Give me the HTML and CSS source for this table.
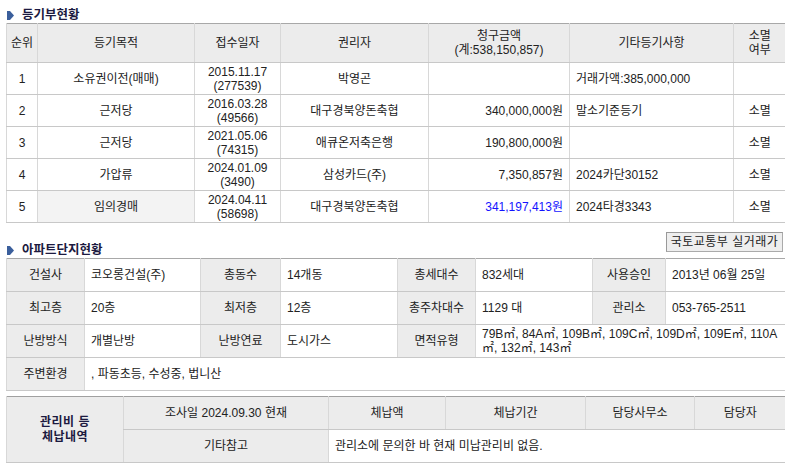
FILE: index.html
```html
<!DOCTYPE html>
<html lang="ko">
<head>
<meta charset="utf-8">
<link rel="stylesheet" href="styles.css">
</head>
<body>
<div class="page">
  <div class="sec-head first">
    <h2 class="sec-title"><svg class="bullet" width="7" height="9" viewBox="0 0 7 9"><polygon points="0,0 3,0 7,4.5 3,9 0,9" fill="#3b5f9c"/></svg>등기부현황</h2>
  </div>
  <table class="grid reg">
    <colgroup>
      <col style="width:31px"><col style="width:157px"><col style="width:86px"><col style="width:148px"><col style="width:141px"><col style="width:164px"><col style="width:52px">
    </colgroup>
    <thead>
      <tr>
        <th>순위</th><th>등기목적</th><th>접수일자</th><th>권리자</th><th>청구금액<br>(계:538,150,857)</th><th>기타등기사항</th><th>소멸<br>여부</th>
      </tr>
    </thead>
    <tbody>
      <tr><td class="c">1</td><td class="c">소유권이전(매매)</td><td class="c">2015.11.17<br>(277539)</td><td class="c">박영곤</td><td class="r"></td><td class="l">거래가액:385,000,000</td><td class="c"></td></tr>
      <tr><td class="c">2</td><td class="c">근저당</td><td class="c">2016.03.28<br>(49566)</td><td class="c">대구경북양돈축협</td><td class="r">340,000,000원</td><td class="l">말소기준등기</td><td class="c">소멸</td></tr>
      <tr><td class="c">3</td><td class="c">근저당</td><td class="c">2021.05.06<br>(74315)</td><td class="c">애큐온저축은행</td><td class="r">190,800,000원</td><td class="l"></td><td class="c">소멸</td></tr>
      <tr><td class="c">4</td><td class="c">가압류</td><td class="c">2024.01.09<br>(3490)</td><td class="c">삼성카드(주)</td><td class="r">7,350,857원</td><td class="l">2024카단30152</td><td class="c">소멸</td></tr>
      <tr><td class="c">5</td><td class="c hl">임의경매</td><td class="c">2024.04.11<br>(58698)</td><td class="c">대구경북양돈축협</td><td class="r blue">341,197,413원</td><td class="l">2024타경3343</td><td class="c">소멸</td></tr>
    </tbody>
  </table>

  <div class="sec-head second">
    <h2 class="sec-title"><svg class="bullet" width="7" height="9" viewBox="0 0 7 9"><polygon points="0,0 3,0 7,4.5 3,9 0,9" fill="#3b5f9c"/></svg>아파트단지현황</h2>
    <button class="btn" type="button">국토교통부 실거래가</button>
  </div>
  <table class="grid apt">
    <colgroup>
      <col style="width:78px"><col style="width:116px"><col style="width:80px"><col style="width:117px"><col style="width:78px"><col style="width:117px"><col style="width:73px"><col style="width:120px">
    </colgroup>
    <tbody>
      <tr><th>건설사</th><td>코오롱건설(주)</td><th>총동수</th><td>14개동</td><th>총세대수</th><td>832세대</td><th>사용승인</th><td>2013년 06월 25일</td></tr>
      <tr><th>최고층</th><td>20층</td><th>최저층</th><td>12층</td><th>총주차대수</th><td>1129 대</td><th>관리소</th><td>053-765-2511</td></tr>
      <tr><th>난방방식</th><td>개별난방</td><th>난방연료</th><td>도시가스</td><th>면적유형</th><td colspan="3" class="area">79B㎡, 84A㎡, 109B㎡, 109C㎡, 109D㎡, 109E㎡, 110A<br>㎡, 132㎡, 143㎡</td></tr>
      <tr><th>주변환경</th><td colspan="7">, 파동초등, 수성중, 법니산</td></tr>
    </tbody>
  </table>

  <table class="grid fee">
    <colgroup>
      <col style="width:117px"><col style="width:205px"><col style="width:117px"><col style="width:140px"><col style="width:109px"><col style="width:91px">
    </colgroup>
    <tbody>
      <tr><th rowspan="2" class="fee-title">관리비 등<br>체납내역</th><th>조사일 2024.09.30 현재</th><th>체납액</th><th>체납기간</th><th>담당사무소</th><th>담당자</th></tr>
      <tr><th>기타참고</th><td colspan="4">관리소에 문의한 바 현재 미납관리비 없음.</td></tr>
    </tbody>
  </table>
</div>
</body>
</html>
```

FILE: styles.css
```css
html, body {
  margin: 0;
  padding: 0;
  background: #ffffff;
}
body {
  font-family: "Liberation Sans", "Noto Sans CJK KR", sans-serif;
  font-size: 12px;
  color: #222222;
  width: 785px;
  overflow: hidden;
}
.page {
  padding-left: 6px;
  width: 779px;
}
.sec-head {
  display: flex;
  align-items: flex-end;
  justify-content: space-between;
}
.sec-head.first {
  height: 23px;
}
.sec-head.second {
  height: 34px;
  margin-top: 1px;
}
.sec-title {
  margin: 0 0 1px 1px;
  display: flex;
  align-items: center;
  gap: 8px;
  font-size: 12.5px;
  font-weight: bold;
  line-height: 14px;
  color: #1c1a40;
}
.bullet {
  display: block;
}
.btn {
  font-family: inherit;
  font-size: 12px;
  color: #222;
  background: #eeeeee;
  border: 1px solid #999999;
  border-right-color: #aaaaaa;
  border-bottom-color: #aaaaaa;
  width: 117px;
  height: 20px;
  padding: 0;
  margin: 0 2px 6px 0;
  line-height: 17px;
  letter-spacing: 0.5px;
}
.grid {
  border-collapse: collapse;
  table-layout: fixed;
  width: 779px;
  border-top: 1px solid #a8a8a8;
  border-bottom: 1px solid #b4b4b4;
}
.grid th, .grid td {
  border-left: 1px solid #d8d8d8;
  border-bottom: 1px solid #c8c8c8;
  padding: 0 6px;
  font-weight: normal;
  line-height: 14px;
  overflow: hidden;
  white-space: nowrap;
}
.grid th {
  background: #ececec;
  text-align: center;
}
.reg thead th {
  height: 38px;
  padding: 0 2px;
}
.reg td {
  height: 31px;
}
.reg .c { text-align: center; padding: 0 2px; }
.reg .r { text-align: right; }
.reg .l { text-align: left; }
.reg .hl { background: #f3f3f3; }
.reg .blue { color: #1414ff; }
.apt th, .apt td {
  height: 32px;
}
.apt td {
  text-align: left;
  padding-left: 6px;
}
.apt .area {
  line-height: 14px;
  padding-right: 4px;
}
.fee {
  margin-top: 5px;
  border-top: 1px solid #a0a0a0;
}
.fee th, .fee td {
  height: 32px;
}
.fee td {
  text-align: left;
  padding-left: 6px;
}
.fee .fee-title {
  font-weight: bold;
  color: #1c1a40;
  line-height: 15px;
  letter-spacing: 0.5px;
}
```
